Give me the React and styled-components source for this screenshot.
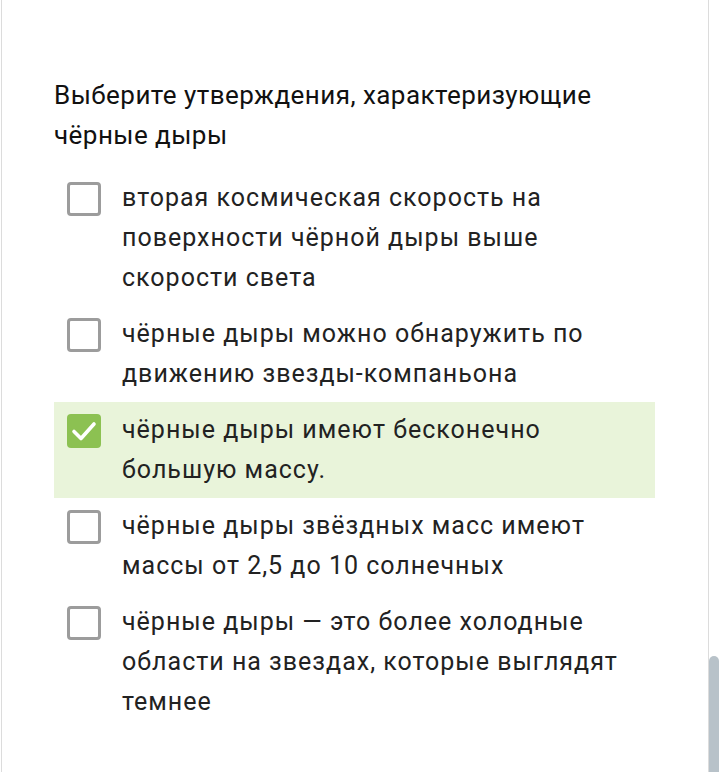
import React from "react";
import styled, { createGlobalStyle } from "styled-components";

const Global = createGlobalStyle`
  html, body { margin: 0; padding: 0; background: #ffffff; }
  body { font-family: Roboto, "Noto Sans", sans-serif; }
`;

const Screen = styled.div`
  display: flex;
  width: 720px;
  height: 772px;
  overflow: hidden;
`;

const Page = styled.div`
  box-sizing: border-box;
  width: 709px;
  height: 772px;
  margin-left: 1px;
  border-left: 1px solid #dcdcdc;
  border-right: 1px solid #dcdcdc;
  padding: 75px 0 0 52px;
`;

const ScrollTrack = styled.div`
  display: flex;
  flex-direction: column;
  justify-content: flex-end;
  width: 10px;
  padding-right: 1px;
`;

const Thumb = styled.div`
  height: 116px;
  background: #b8c2c9;
  border-radius: 5px 5px 0 0;
`;

const Title = styled.h1`
  margin: 0 0 15px 0;
  font-family: Roboto, "Noto Sans", sans-serif;
  font-weight: 400;
  font-size: 26px;
  line-height: 40px;
  letter-spacing: 0.45px;
  color: #111;
  width: 600px;
`;

const List = styled.div`
  display: flex;
  flex-direction: column;
  width: 601px;
`;

const Option = styled.label`
  display: flex;
  align-items: flex-start;
  padding: 8px 0 8px 13px;
  background: ${(p) => (p.$checked ? "#e9f4da" : "transparent")};
`;

const Box = styled.span`
  box-sizing: border-box;
  flex: none;
  width: 34px;
  height: 34px;
  margin-top: 4px;
  border-radius: 4px;
  display: flex;
  align-items: center;
  justify-content: center;
  border: ${(p) => (p.$checked ? "none" : "3px solid #9c9c9c")};
  background: ${(p) => (p.$checked ? "#8cc152" : "#fff")};
`;

const Text = styled.span`
  margin-left: 21px;
  width: 515px;
  font-family: Roboto, "Noto Sans", sans-serif;
  font-size: 25px;
  line-height: 40px;
  letter-spacing: 1px;
  color: #222;
`;

const options = [
  { text: "вторая космическая скорость на поверхности чёрной дыры выше скорости света" },
  { text: "чёрные дыры можно обнаружить по движению звезды-компаньона" },
  { text: "чёрные дыры имеют бесконечно большую массу.", checked: true },
  { text: "чёрные дыры звёздных масс имеют массы от 2,5 до 10 солнечных" },
  { text: "чёрные дыры — это более холодные области на звездах, которые выглядят темнее" },
];

const Check = () => (
  <svg width="28" height="24" viewBox="0 0 28 24">
    <path d="M4 12.5 L11 19.5 L24 5" fill="none" stroke="#fff" strokeWidth="3.6" strokeLinecap="round" strokeLinejoin="round" />
  </svg>
);

export default function App() {
  return (
    <>
      <Global />
      <Screen>
        <Page>
          <Title>Выберите утверждения, характеризующие чёрные дыры</Title>
          <List>
            {options.map((o, i) => (
              <Option key={i} $checked={o.checked}>
                <Box $checked={o.checked}>{o.checked && <Check />}</Box>
                <Text>{o.text}</Text>
              </Option>
            ))}
          </List>
        </Page>
        <ScrollTrack>
          <Thumb />
        </ScrollTrack>
      </Screen>
    </>
  );
}
